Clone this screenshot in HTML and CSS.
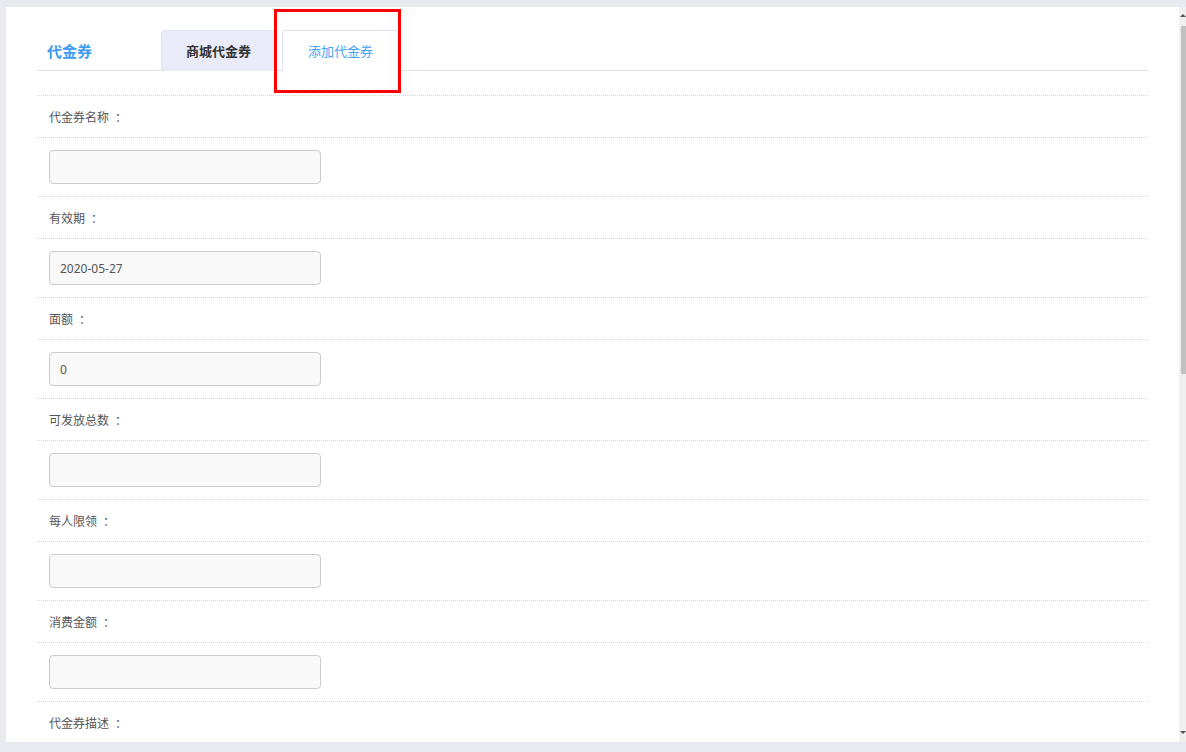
FILE: index.html
```html
<!DOCTYPE html>
<html lang="zh-CN">
<head>
  <meta charset="UTF-8" />
  <meta name="viewport" content="width=device-width, initial-scale=1.0"/>
  <title>添加代金券</title>
  <link rel="stylesheet" href="styles.css">
</head>
<body>
  <div class="frame">
    <div class="panel">
      <div class="tab-head">
        <h3 class="tab-title">代金券</h3>
        <ul class="tabs">
          <li class="tab">商城代金券</li>
          <li class="tab active">添加代金券</li>
        </ul>
      </div>

      <form class="coupon-form">
        <div class="row label-row">代金券名称<span class="colon">：</span></div>
        <div class="row field-row"><input class="field" type="text" value=""></div>

        <div class="row label-row">有效期<span class="colon">：</span></div>
        <div class="row field-row"><input class="field" type="text" value="2020-05-27"></div>

        <div class="row label-row">面额<span class="colon">：</span></div>
        <div class="row field-row"><input class="field" type="text" value="0"></div>

        <div class="row label-row">可发放总数<span class="colon">：</span></div>
        <div class="row field-row"><input class="field" type="text" value=""></div>

        <div class="row label-row">每人限领<span class="colon">：</span></div>
        <div class="row field-row"><input class="field" type="text" value=""></div>

        <div class="row label-row">消费金额<span class="colon">：</span></div>
        <div class="row field-row"><input class="field" type="text" value=""></div>

        <div class="row label-row">代金券描述<span class="colon">：</span></div>
        <div class="row field-row"><textarea class="field area"></textarea></div>
      </form>
    </div>

    <!-- scrollbar of the embedded page -->
    <div class="scrollbar">
      <span class="arrow up"></span>
      <span class="thumb"></span>
      <span class="arrow down"></span>
    </div>
  </div>

  <!-- annotation box over the active tab -->
  <div class="mark"></div>
</body>
</html>
```

FILE: styles.css
```css
body {
  margin: 0;
  padding: 0;
  background-color: #e9eaef;
  font-family: "Noto Sans CJK SC", "Noto Sans", sans-serif;
  font-size: 12px;
  color: #555;
}

.frame {
  display: flex;
  margin: 7px 0 0 6px;
  height: 735px;
  overflow: hidden;
  background-color: #fff;
}

.panel {
  flex: 1;
  padding: 23px 31px 0 31px;
}

.scrollbar {
  display: flex;
  flex-direction: column;
  align-items: flex-end;
  width: 7px;
  background-color: #f0f0f0;
}

.thumb {
  width: 5px;
  height: 348px;
  margin-top: 9px;
  background-color: #c1c1c1;
}

.arrow {
  width: 0;
  height: 0;
  border-left: 3px solid transparent;
  border-right: 3px solid transparent;
}

.arrow.up {
  margin-top: 7px;
  border-bottom: 3px solid #505050;
}

.arrow.down {
  margin-top: auto;
  margin-bottom: 8px;
  border-top: 3px solid #505050;
}

.tab-head {
  display: flex;
  align-items: flex-end;
  height: 40px;
  border-bottom: 1px solid #dfe3f1;
}

.tab-title {
  width: 114px;
  margin: 0;
  padding-left: 10px;
  align-self: center;
  font-size: 15px;
  font-weight: bold;
  color: #3d9bf0;
}

.tabs {
  display: flex;
  gap: 6px;
  list-style: none;
  margin: 0 0 -1px 0;
  padding: 0;
}

.tab {
  box-sizing: border-box;
  height: 41px;
  line-height: 40px;
  padding: 0 24px;
  border: 1px solid #dfe3f1;
  border-bottom: none;
  border-radius: 4px 4px 0 0;
  background-color: #e9ecf8;
  font-size: 13px;
  font-weight: bold;
  color: #333;
}

.tab.active {
  padding: 0 25px;
  background-color: #fff;
  font-weight: normal;
  color: #45a2f5;
}

.coupon-form {
  margin-top: 24px;
}

.row {
  border-top: 1px dotted #b9e1f0;
  padding-left: 12px;
}

.label-row {
  height: 41px;
  line-height: 41px;
}

.colon {
  padding-left: 6px;
}

.field-row {
  padding-top: 12px;
  padding-bottom: 12px;
}

.field {
  display: block;
  box-sizing: border-box;
  width: 272px;
  height: 34px;
  padding: 0 10px;
  border: 1px solid #ccc;
  border-radius: 4px;
  background-color: #f9f9f9;
  font-family: "Noto Sans", "Noto Sans CJK SC", sans-serif;
  font-size: 12px;
  color: #555;
  outline: none;
}

.area {
  width: 500px;
  height: 90px;
  padding: 8px 10px;
  resize: none;
}

.mark {
  position: absolute;
  left: 274px;
  top: 9px;
  width: 121px;
  height: 78px;
  border: 3px solid #f00;
}
```
